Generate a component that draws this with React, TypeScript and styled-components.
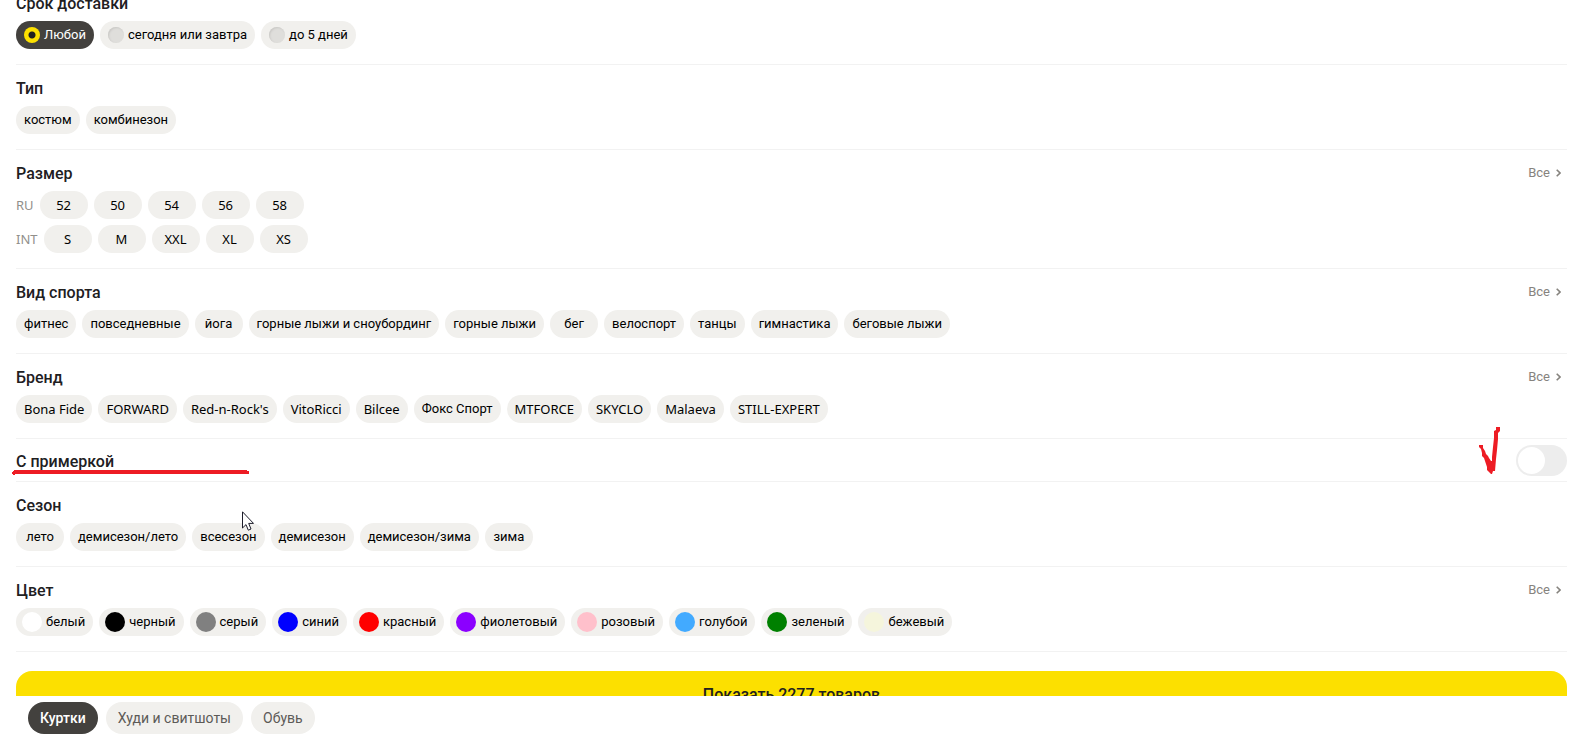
import React from 'react';
import styled, { createGlobalStyle, css } from 'styled-components';

const GlobalStyle = createGlobalStyle`
  *, *::before, *::after { box-sizing: border-box; }
  body {
    margin: 0;
    background: #fff;
    color: #000;
    font: 400 13px/20px Roboto, "Liberation Sans", sans-serif;
  }
  button, input { font: inherit; margin: 0; }
`;

const Page = styled.div`
  display: flex;
  flex-direction: column;
  height: 100vh;
  overflow: hidden;
`;

const Scroller = styled.main`
  flex: 1;
  min-height: 0;
  overflow: hidden;
`;

const Filters = styled.form`
  display: flex;
  flex-direction: column;
  margin: -20px 11px 0 16px;
`;

const Section = styled.section`
  position: relative;
  padding: 14px 0 15px;
  border-bottom: 1px solid #f2f2f2;
`;

const SectionHead = styled.header`
  display: flex;
  align-items: flex-start;
  justify-content: space-between;
  height: 20px;
  margin-bottom: 7px;
  padding-right: 6px;
`;

const Title = styled.h2`
  margin: 0;
  font-size: 16px;
  line-height: 20px;
  font-weight: 500;
  color: #21201f;
`;

const AllLink = styled.a`
  display: flex;
  align-items: center;
  gap: 6px;
  font-size: 13px;
  line-height: 18px;
  color: #86837e;
  text-decoration: none;
`;

const ChipRow = styled.div`
  display: flex;
  flex-wrap: wrap;
  align-items: center;
  gap: 6px;

  & + & { margin-top: 6px; }
`;

const latinText = css`
  font-family: "Noto Sans", "Liberation Sans", sans-serif;
`;

const RowLabel = styled.span`
  ${latinText}
  color: #918f8b;
`;

const Chip = styled.label<{ $variant?: 'radio' | 'color'; $selected?: boolean; $latin?: boolean }>`
  position: relative;
  display: inline-flex;
  align-items: center;
  justify-content: center;
  gap: 4px;
  min-width: 48px;
  height: 28px;
  padding: 0 8px 0 ${p => (p.$variant === 'color' ? 6 : 8)}px;
  border-radius: 14px;
  background: #f1f0ed;
  white-space: nowrap;
  cursor: pointer;
  ${p => p.$latin && latinText}
  ${p => p.$selected && css`
    background: #43413e;
    color: #fff;
  `}
`;

const ChipInput = styled.input`
  position: absolute;
  inset: 0;
  width: 100%;
  height: 100%;
  opacity: 0;
  cursor: pointer;
`;

const Radio = styled.input`
  appearance: none;
  width: 16px;
  height: 16px;
  border-radius: 50%;
  background: #dfdedb;
  box-shadow: inset 1px 1px 2px #c9c8c5;

  &:checked {
    background: radial-gradient(circle, #21201f 3px, #fce000 4px);
    box-shadow: none;
  }
`;

const Swatch = styled.input<{ $color: string }>`
  appearance: none;
  width: 20px;
  height: 20px;
  border-radius: 50%;
  background: ${p => p.$color};
`;

const SwitchRow = styled.label`
  position: relative;
  display: flex;
  align-items: center;
  justify-content: space-between;
  height: 43px;
  border-bottom: 1px solid #f2f2f2;
`;

const SwitchTitle = styled(Title).attrs({ as: 'span' })`
  padding-top: 3px;
`;

const Switch = styled.input`
  appearance: none;
  width: 51px;
  height: 31px;
  padding: 2px;
  border-radius: 16px;
  background: #ededed;

  &::before {
    content: '';
    display: block;
    width: 27px;
    height: 27px;
    border-radius: 50%;
    background: #fff;
  }
`;

const Underline = styled.svg`
  position: absolute;
  left: -4px;
  top: 31px;
`;

const Tick = styled.svg`
  position: absolute;
  right: 67px;
  top: -12px;
`;

const Pointer = styled.svg`
  position: absolute;
  left: 226px;
  top: 29px;
`;

const Submit = styled.button`
  height: 48px;
  margin-top: 19px;
  padding: 0;
  border: 0;
  border-radius: 16px;
  background: #fce000;
  color: #21201f;
  font-size: 16px;
  line-height: 20px;
  font-weight: 500;
`;

const TabBar = styled.nav`
  display: flex;
  align-items: flex-start;
  gap: 8px;
  height: 60px;
  padding: 6px 28px;
  background: #fff;
`;

const Tab = styled.button<{ $active?: boolean }>`
  height: 32px;
  padding: 0 12px;
  border: 0;
  border-radius: 16px;
  background: ${p => (p.$active ? '#43413e' : '#f1f0ed')};
  color: ${p => (p.$active ? '#fff' : '#5c5a57')};
  font-size: 14px;
  font-weight: ${p => (p.$active ? 500 : 400)};
`;

const isLatin = (text: string) => /^[\x20-\x7e]+$/.test(text);

const Checks = ({ items }: { items: string[] }) => (
  <>
    {items.map(item => (
      <Chip key={item} $latin={isLatin(item)}>
        <ChipInput type="checkbox" />
        {item}
      </Chip>
    ))}
  </>
);

const Group = ({ title, all, children }: { title: string; all?: boolean; children: React.ReactNode }) => (
  <Section>
    <SectionHead>
      <Title>{title}</Title>
      {all && (
        <AllLink href="#">
          Все
          <svg width="5" height="8" viewBox="0 0 5 8" fill="none" stroke="#86837e" strokeWidth="1.6">
            <path d="M0.7 0.8 4 4 0.7 7.2" />
          </svg>
        </AllLink>
      )}
    </SectionHead>
    {children}
  </Section>
);

const delivery = ['Любой', 'сегодня или завтра', 'до 5 дней'];
const sports = ['фитнес', 'повседневные', 'йога', 'горные лыжи и сноубординг', 'горные лыжи', 'бег', 'велоспорт', 'танцы', 'гимнастика', 'беговые лыжи'];
const brands = ['Bona Fide', 'FORWARD', "Red-n-Rock's", 'VitoRicci', 'Bilcee', 'Фокс Спорт', 'MTFORCE', 'SKYCLO', 'Malaeva', 'STILL-EXPERT'];
const seasons = ['лето', 'демисезон/лето', 'всесезон', 'демисезон', 'демисезон/зима', 'зима'];
const colors = [
  ['белый', '#ffffff'],
  ['черный', '#000000'],
  ['серый', '#808080'],
  ['синий', '#0000ff'],
  ['красный', '#ff0000'],
  ['фиолетовый', '#8b00ff'],
  ['розовый', '#ffc0cb'],
  ['голубой', '#42aaff'],
  ['зеленый', '#008000'],
  ['бежевый', '#f5f5dc'],
];

export default function App() {
  const [chosen, setChosen] = React.useState(delivery[0]);

  return (
    <Page>
      <GlobalStyle />
      <Scroller>
        <Filters>
          <Group title="Срок доставки">
            <ChipRow>
              {delivery.map(item => (
                <Chip key={item} $variant="radio" $selected={item === chosen}>
                  <Radio type="radio" name="delivery" checked={item === chosen} onChange={() => setChosen(item)} />
                  {item}
                </Chip>
              ))}
            </ChipRow>
          </Group>
          <Group title="Тип">
            <ChipRow><Checks items={['костюм', 'комбинезон']} /></ChipRow>
          </Group>
          <Group title="Размер" all>
            <ChipRow>
              <RowLabel>RU</RowLabel>
              <Checks items={['52', '50', '54', '56', '58']} />
            </ChipRow>
            <ChipRow>
              <RowLabel>INT</RowLabel>
              <Checks items={['S', 'M', 'XXL', 'XL', 'XS']} />
            </ChipRow>
          </Group>
          <Group title="Вид спорта" all>
            <ChipRow><Checks items={sports} /></ChipRow>
          </Group>
          <Group title="Бренд" all>
            <ChipRow><Checks items={brands} /></ChipRow>
          </Group>
          <SwitchRow>
            <SwitchTitle>С примеркой</SwitchTitle>
            <Switch type="checkbox" role="switch" />
            <Underline width="237" height="5" viewBox="0 0 237 5" fill="#ed1c24">
              <path d="M1 1H2V0H235V1H237V4H235V4H3V5H1V4H0V2H1Z" />
            </Underline>
            <Tick width="21" height="47" viewBox="0 0 21 47" fill="#ed1c24">
              <path d="M0 18H4V21L6 24L7 27L9 29L10 31L12 34H13V30L14 20L15 11V4L17 3V0H21V4L19 6V12L18 23L17 32L16 44H14L13 47H12L10 45L8 43V40L7 37L6 34L5 31L3 29V26L2 22L0 20Z" />
            </Tick>
          </SwitchRow>
          <Group title="Сезон">
            <ChipRow><Checks items={seasons} /></ChipRow>
            <Pointer width="12" height="20" viewBox="0 0 12 20">
              <path d="M0.5 0.8V17L4 13.6L6.3 19.2L9 18L6.7 12.4H11.5Z" fill="#fff" stroke="#1d1d2b" strokeWidth="1" />
            </Pointer>
          </Group>
          <Group title="Цвет" all>
            <ChipRow>
              {colors.map(([name, value]) => (
                <Chip key={name} $variant="color">
                  <Swatch type="checkbox" $color={value} />
                  {name}
                </Chip>
              ))}
            </ChipRow>
          </Group>
          <Submit type="button">Показать 2277 товаров</Submit>
        </Filters>
      </Scroller>
      <TabBar>
        <Tab $active>Куртки</Tab>
        <Tab>Худи и свитшоты</Tab>
        <Tab>Обувь</Tab>
      </TabBar>
    </Page>
  );
}
